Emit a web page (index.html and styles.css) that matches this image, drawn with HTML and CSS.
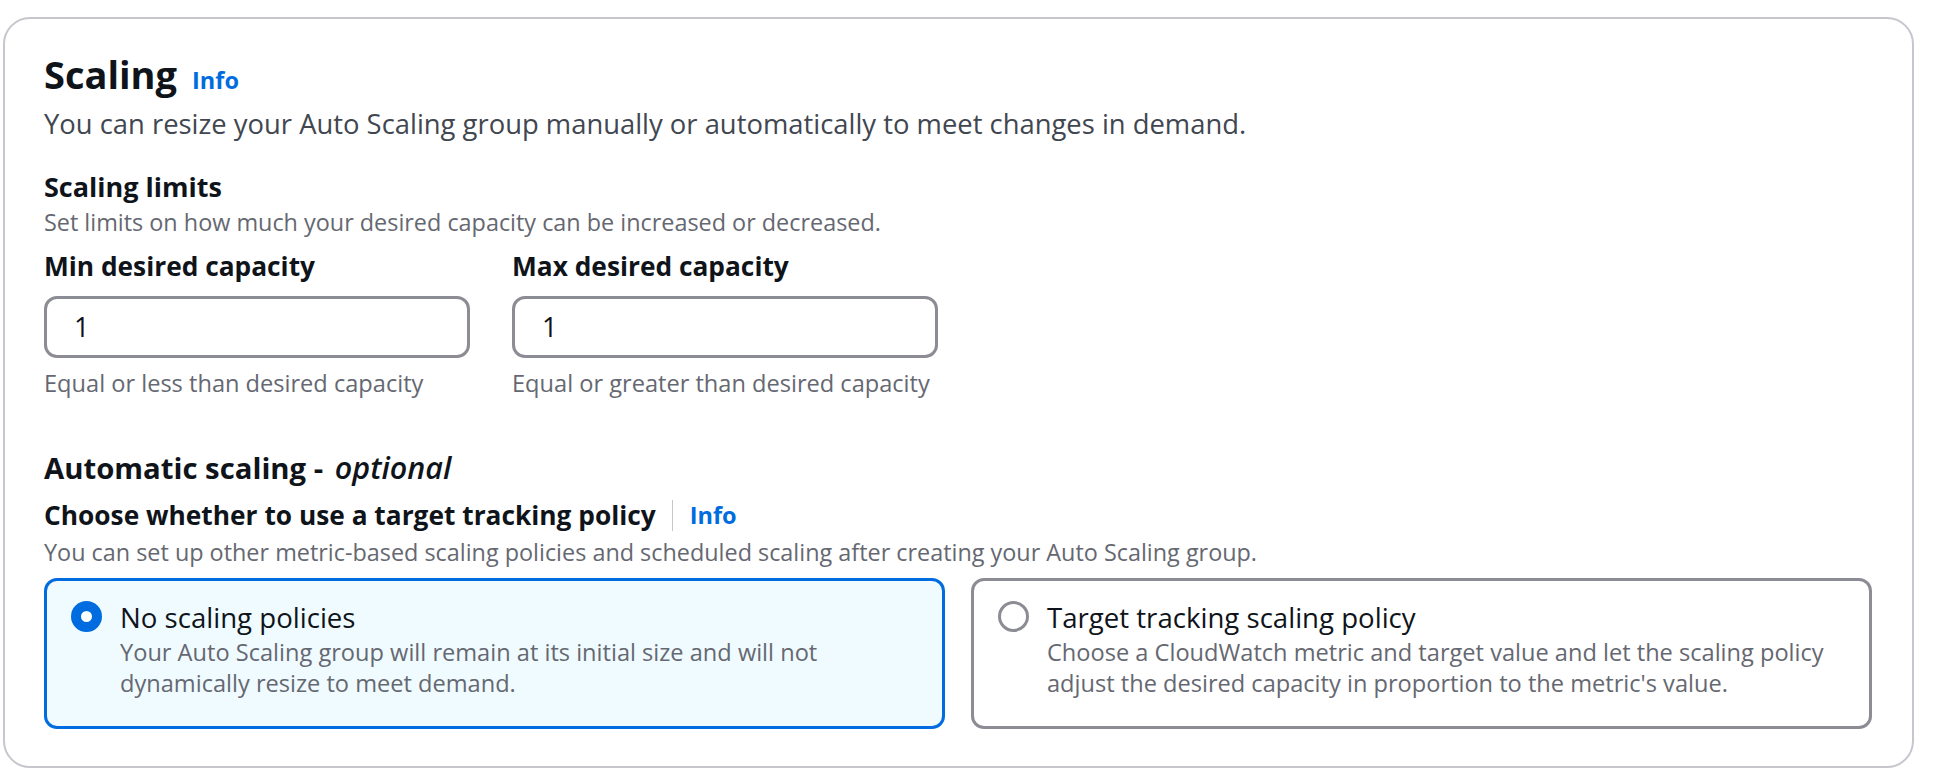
FILE: index.html
```html
<!DOCTYPE html>
<html lang="en">
<head>
<meta charset="utf-8">
<title>Scaling</title>
<link rel="stylesheet" href="styles.css">
</head>
<body>
<div class="container">
  <div class="header">
    <h2 class="title">Scaling <a class="info" href="#">Info</a></h2>
    <p class="desc">You can resize your Auto Scaling group manually or automatically to meet changes in demand.</p>
  </div>

  <section class="limits">
    <h3 class="section-title">Scaling limits</h3>
    <p class="sub">Set limits on how much your desired capacity can be increased or decreased.</p>
    <div class="fields">
      <div class="field">
        <label class="label">Min desired capacity</label>
        <div class="input">1</div>
        <p class="hint">Equal or less than desired capacity</p>
      </div>
      <div class="field">
        <label class="label">Max desired capacity</label>
        <div class="input">1</div>
        <p class="hint">Equal or greater than desired capacity</p>
      </div>
    </div>
  </section>

  <section class="auto">
    <h3 class="section-title large">Automatic scaling - <i>optional</i></h3>
    <div class="label-row">
      <span class="label">Choose whether to use a target tracking policy</span>
      <span class="divider"></span>
      <a class="info" href="#">Info</a>
    </div>
    <p class="sub tight">You can set up other metric-based scaling policies and scheduled scaling after creating your Auto Scaling group.</p>
    <div class="tiles">
      <div class="tile selected">
        <span class="radio checked"></span>
        <div class="tile-text">
          <div class="tile-title">No scaling policies</div>
          <div class="tile-desc">Your Auto Scaling group will remain at its initial size and will not dynamically resize to meet demand.</div>
        </div>
      </div>
      <div class="tile">
        <span class="radio"></span>
        <div class="tile-text">
          <div class="tile-title">Target tracking scaling policy</div>
          <div class="tile-desc">Choose a CloudWatch metric and target value and let the scaling policy adjust the desired capacity in proportion to the metric's value.</div>
        </div>
      </div>
    </div>
  </section>
</div>
</body>
</html>
```

FILE: styles.css
```css
* { box-sizing: border-box; }
body {
  margin: 0;
  background: #ffffff;
  font-family: "Open Sans", "Noto Sans", sans-serif;
  color: #0f141a;
}
.container {
  margin: 17px 26px 0 3px;
  height: 751px;
  border: 2px solid #c6c6cd;
  border-radius: 27px;
  padding: 30px 40px 0 39px;
}
.title {
  margin: 0;
  font-size: 38px;
  line-height: 50px;
  font-weight: 700;
  display: flex;
  align-items: baseline;
  gap: 15px;
}
.info {
  color: #006ce0;
  font-size: 23.5px;
  font-weight: 700;
  text-decoration: none;
}
.desc {
  margin: 0;
  font-size: 27.4px;
  line-height: 38px;
  color: #414750;
}
.limits { margin-top: 26px; }
.section-title {
  margin: 0;
  font-size: 27px;
  line-height: 36px;
  font-weight: 700;
}
.section-title.large {
  font-size: 29.3px;
  line-height: 38px;
}
.section-title i {
  font-weight: 600;
  font-size: 30.5px;
  padding-left: 4px;
}
.sub {
  margin: 1px 0 0;
  font-size: 23.4px;
  line-height: 32px;
  color: #656871;
}
.sub.tight { margin-top: 3px; }
.fields {
  display: flex;
  gap: 42px;
  margin-top: 10px;
}
.field { width: 426px; }
.label {
  display: block;
  font-size: 26.3px;
  line-height: 36px;
  font-weight: 700;
}
.input {
  margin-top: 12px;
  height: 62px;
  border: 3px solid #8c8c94;
  border-radius: 13px;
  padding: 0 27px;
  font-size: 27px;
  line-height: 56px;
  color: #0f141a;
}
.hint {
  margin: 9px 0 0;
  font-size: 23.6px;
  line-height: 32px;
  color: #656871;
}
.auto { margin-top: 49px; }
.label-row {
  display: flex;
  align-items: center;
  margin-top: 10px;
}
.divider {
  width: 1px;
  height: 31px;
  background: #c6c6cd;
  margin: 0 17px 0 16px;
}
.tiles {
  display: grid;
  grid-template-columns: 1fr 1fr;
  gap: 26px;
  margin-top: 10px;
}
.tile {
  height: 151px;
  border: 3px solid #8c8c94;
  border-radius: 13px;
  padding: 16px 24px;
  display: flex;
  gap: 18px;
  background: #fff;
}
.tile.selected {
  border-color: #006ce0;
  background: #f0fbff;
}
.radio {
  flex: none;
  width: 31px;
  height: 31px;
  margin-top: 4px;
  border-radius: 50%;
  border: 3px solid #8c8c94;
  background: #fff;
}
.radio.checked {
  border: 10.5px solid #006ce0;
}
.tile-title {
  font-size: 27.6px;
  line-height: 40px;
}
.tile-desc {
  font-size: 23.6px;
  line-height: 31px;
  color: #656871;
}
```
